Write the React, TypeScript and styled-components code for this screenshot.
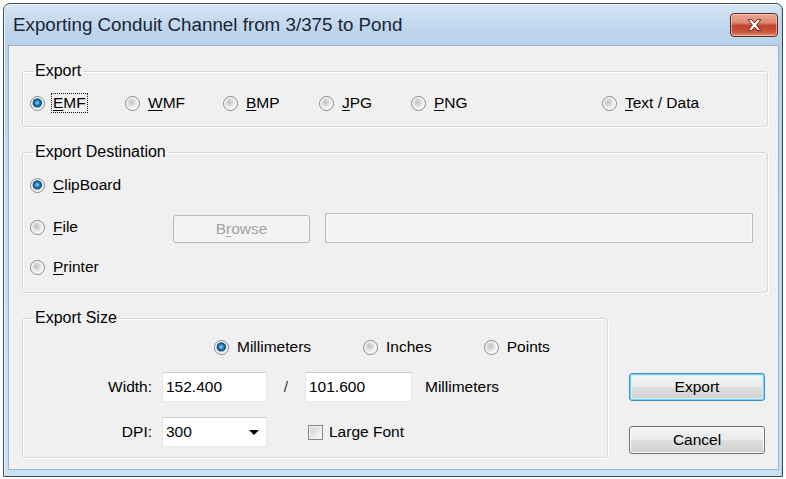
import React from "react";
import styled, { createGlobalStyle } from "styled-components";

const Global = createGlobalStyle`
  html, body { margin: 0; padding: 0; background: #ffffff; }
  body {
    width: 786px; height: 479px; overflow: hidden;
    font-family: "Liberation Sans", Arial, sans-serif;
    font-size: 15.5px; color: #000;
  }
  * { box-sizing: border-box; }
`;

const Stage = styled.div`
  width: 786px;
  height: 479px;
  padding: 3px 3px 2px 3px;
`;

const Window = styled.div`
  width: 780px;
  height: 474px;
  border: 1px solid #3f4c5a;
  border-radius: 7px 7px 0 0;
  background: linear-gradient(180deg, #d6e5f4 0%, #bfd6ed 5%, #b8d0ea 9%, #c4dbf0 40%, #c9e2f3 100%);
  display: flex;
  flex-direction: column;
  overflow: hidden;
  box-shadow: inset 1px 1px 0 #eef5fb, inset -1px 0 0 #a9d1ee;
`;

const TitleBar = styled.div`
  height: 41px;
  flex: none;
  display: flex;
  align-items: center;
  justify-content: space-between;
  padding: 0 4px 0 9px;
`;

const Title = styled.div`
  font-family: "Liberation Sans", Arial, sans-serif;
  font-size: 18.8px;
  color: #1b2633;
  padding-top: 1px;
`;

const CloseButton = styled.div`
  width: 48px;
  height: 24px;
  border: 1px solid #5d2a22;
  border-radius: 4px;
  background: linear-gradient(180deg, #eaa795 0%, #dd8a74 40%, #c3442c 52%, #c9543b 80%, #e08a6a 100%);
  box-shadow: inset 0 0 0 1px rgba(255, 220, 210, 0.55);
  display: flex;
  align-items: center;
  justify-content: center;
`;

const Client = styled.div`
  flex: 1;
  margin: 0 3px 6px 4px;
  background: #f0f0f0;
  border: 1px solid #9fb3c8;
  padding: 17px 10px 11px 13px;
  display: flex;
  flex-direction: column;
  gap: 17px;
`;

const Group = styled.fieldset<{ $w?: number; $pt: number; $pb: number }>`
  margin: 0;
  min-width: 0;
  width: ${(p) => (p.$w ? `${p.$w}px` : "auto")};
  border: 1px solid #d5d8dc;
  border-radius: 3px;
  box-shadow: inset 1px 1px 0 #ffffff, 1px 1px 0 #ffffff;
  padding: ${(p) => `${p.$pt}px 14px ${p.$pb}px 7px`};
`;

const Legend = styled.legend`
  margin-left: 3px;
  padding: 0 2px;
  line-height: 16px;
  height: 16px;
  font-size: 16px;
  color: #000;
`;

const FormatRow = styled.div`
  display: grid;
  grid-template-columns: 95px 98px 96px 92px 191px auto;
  height: 20px;
  align-items: center;
`;

const Option = styled.label`
  display: flex;
  align-items: center;
  gap: 6px;
  height: 20px;
  white-space: nowrap;
  cursor: default;
`;

const RadioCircle = styled.span<{ $on?: boolean }>`
  flex: none;
  width: 15px;
  height: 15px;
  border-radius: 50%;
  border: 1px solid #85898e;
  background: ${(p) =>
    p.$on
      ? "radial-gradient(circle at 48% 45%, #a6e4fc 0px, #43a7da 1.4px, #1d6c9d 3px, #134a72 4.2px, #b9c8d4 4.9px, #e6eaed 5.6px, #f4f4f4 7px)"
      : "radial-gradient(circle at 42% 40%, #bfc1c4 0px, #d3d5d7 2.5px, #e6e7e8 4.5px, #f7f7f7 6.5px)"};
  box-shadow: inset 0 0 0 1px #fbfbfb;
`;

const OptText = styled.span<{ $focus?: boolean }>`
  padding: 0 1px;
  line-height: 18px;
  border: 1px ${(p) => (p.$focus ? "dotted #1a1a1a" : "solid transparent")};
  u {
    text-decoration: underline;
    text-underline-offset: 2px;
    text-decoration-thickness: 1px;
  }
`;

const DestList = styled.div`
  display: flex;
  flex-direction: column;
  gap: 11px;
`;

const DestRow = styled.div`
  display: grid;
  grid-template-columns: 128px 137px 1fr;
  column-gap: 15px;
  height: 30px;
  align-items: center;
`;

const BrowseButton = styled.button`
  height: 28px;
  margin-top: 4px;
  border: 1px solid #b5b9bd;
  border-radius: 3px;
  background: #f4f4f4;
  color: #a3a3a3;
  font-family: "Liberation Sans", Arial, sans-serif;
  font-size: 15.5px;
  padding: 0;
  u { text-underline-offset: 2px; }
`;

const PathBox = styled.div`
  height: 30px;
  margin-top: 2px;
  border: 1px solid #b9bcbf;
  border-radius: 1px;
  background: #f2f2f2;
  box-shadow: inset 0 0 0 1px #f7f7f7;
`;

const BottomRow = styled.div`
  display: flex;
  gap: 21px;
`;

const SizeBody = styled.div`
  display: flex;
  flex-direction: column;
`;

const UnitsRow = styled.div`
  display: flex;
  gap: 50px;
  margin-left: 184px;
  height: 18px;
  align-items: center;
`;

const FieldRow = styled.div<{ $mt: number }>`
  display: flex;
  align-items: center;
  height: 30px;
  margin-top: ${(p) => p.$mt}px;
`;

const FieldLabel = styled.span`
  width: 122px;
  text-align: right;
  flex: none;
`;

const TextBox = styled.div<{ $w: number; $ml?: number }>`
  width: ${(p) => p.$w}px;
  margin-left: ${(p) => p.$ml ?? 0}px;
  height: 30px;
  flex: none;
  display: flex;
  align-items: center;
  padding: 0 6px 0 3px;
  background: #ffffff;
  border: 1px solid;
  border-color: #c9ccd1 #e3e5e9 #e8ebef #e3e5e9;
`;

const Slash = styled.span`
  width: 38px;
  text-align: center;
  flex: none;
  color: #333;
`;

const UnitLabel = styled.span`
  margin-left: 13px;
`;

const Arrow = styled.span`
  margin-left: auto;
  margin-right: 1px;
  width: 0;
  height: 0;
  border-left: 5px solid transparent;
  border-right: 5px solid transparent;
  border-top: 5px solid #000;
`;

const CheckLabel = styled.label`
  display: flex;
  align-items: center;
  gap: 6px;
  margin-left: 41px;
`;

const CheckBox = styled.span`
  width: 15px;
  height: 15px;
  flex: none;
  border: 1px solid #85898e;
  background: linear-gradient(135deg, #d2d3d4 0%, #e5e6e6 50%, #fafafa 100%);
  box-shadow: inset 0 0 0 1px #f4f4f4;
`;

const ButtonColumn = styled.div`
  width: 136px;
  display: flex;
  flex-direction: column;
  justify-content: flex-end;
  gap: 25px;
  padding-bottom: 4px;
`;

const DialogButton = styled.button<{ $default?: boolean }>`
  height: 28px;
  width: 100%;
  border-radius: 3px;
  border: 1px solid ${(p) => (p.$default ? "#3c8fbf" : "#707070")};
  background: linear-gradient(180deg, #f3f3f3 0%, #ececec 48%, #dedede 52%, #d1d1d1 100%);
  box-shadow: ${(p) =>
    p.$default ? "inset 0 0 0 1px #7fd3f5, inset 0 0 0 2px #cfeefb" : "inset 0 0 0 1px #fcfcfc"};
  font-family: "Liberation Sans", Arial, sans-serif;
  font-size: 15.5px;
  color: #000;
  padding: 0;
`;

const Radio: React.FC<{ on?: boolean; focus?: boolean; children: React.ReactNode }> = ({
  on,
  focus,
  children,
}) => (
  <Option>
    <RadioCircle $on={on} />
    <OptText $focus={focus}>{children}</OptText>
  </Option>
);

const CloseIcon = () => (
  <svg width="17" height="14" viewBox="0 0 16 13">
    <path
      d="M2 1.5 L5.5 1.5 L8 4.6 L10.5 1.5 L14 1.5 L10 6.5 L14 11.5 L10.5 11.5 L8 8.4 L5.5 11.5 L2 11.5 L6 6.5 Z"
      fill="#ffffff"
      stroke="#6b2418"
      strokeWidth="0.9"
      strokeLinejoin="round"
    />
  </svg>
);

export default function App() {
  return (
    <>
      <Global />
      <Stage>
        <Window>
          <TitleBar>
            <Title>Exporting Conduit Channel from 3/375 to Pond</Title>
            <CloseButton>
              <CloseIcon />
            </CloseButton>
          </TitleBar>
          <Client>
            <Group $pt={14} $pb={13}>
              <Legend>Export</Legend>
              <FormatRow>
                <Radio on focus>
                  <u>E</u>MF
                </Radio>
                <Radio>
                  <u>W</u>MF
                </Radio>
                <Radio>
                  <u>B</u>MP
                </Radio>
                <Radio>
                  <u>J</u>PG
                </Radio>
                <Radio>
                  <u>P</u>NG
                </Radio>
                <Radio>
                  <u>T</u>ext / Data
                </Radio>
              </FormatRow>
            </Group>

            <Group $pt={10} $pb={10}>
              <Legend>Export Destination</Legend>
              <DestList>
                <DestRow>
                  <Radio on>
                    <u>C</u>lipBoard
                  </Radio>
                </DestRow>
                <DestRow>
                  <Radio>
                    <u>F</u>ile
                  </Radio>
                  <BrowseButton disabled>
                    B<u>r</u>owse
                  </BrowseButton>
                  <PathBox />
                </DestRow>
                <DestRow>
                  <Radio>
                    <u>P</u>rinter
                  </Radio>
                </DestRow>
              </DestList>
            </Group>

            <BottomRow>
              <Group $w={586} $pt={12} $pb={10}>
                <Legend>Export Size</Legend>
                <SizeBody>
                  <UnitsRow>
                    <Radio on>Millimeters</Radio>
                    <Radio>Inches</Radio>
                    <Radio>Points</Radio>
                  </UnitsRow>
                  <FieldRow $mt={16}>
                    <FieldLabel>Width:</FieldLabel>
                    <TextBox $w={105} $ml={10}>152.400</TextBox>
                    <Slash>/</Slash>
                    <TextBox $w={107}>101.600</TextBox>
                    <UnitLabel>Millimeters</UnitLabel>
                  </FieldRow>
                  <FieldRow $mt={15}>
                    <FieldLabel>DPI:</FieldLabel>
                    <TextBox $w={105} $ml={10}>
                      300
                      <Arrow />
                    </TextBox>
                    <CheckLabel>
                      <CheckBox />
                      Large Font
                    </CheckLabel>
                  </FieldRow>
                </SizeBody>
              </Group>
              <ButtonColumn>
                <DialogButton $default>Export</DialogButton>
                <DialogButton>Cancel</DialogButton>
              </ButtonColumn>
            </BottomRow>
          </Client>
        </Window>
      </Stage>
    </>
  );
}
